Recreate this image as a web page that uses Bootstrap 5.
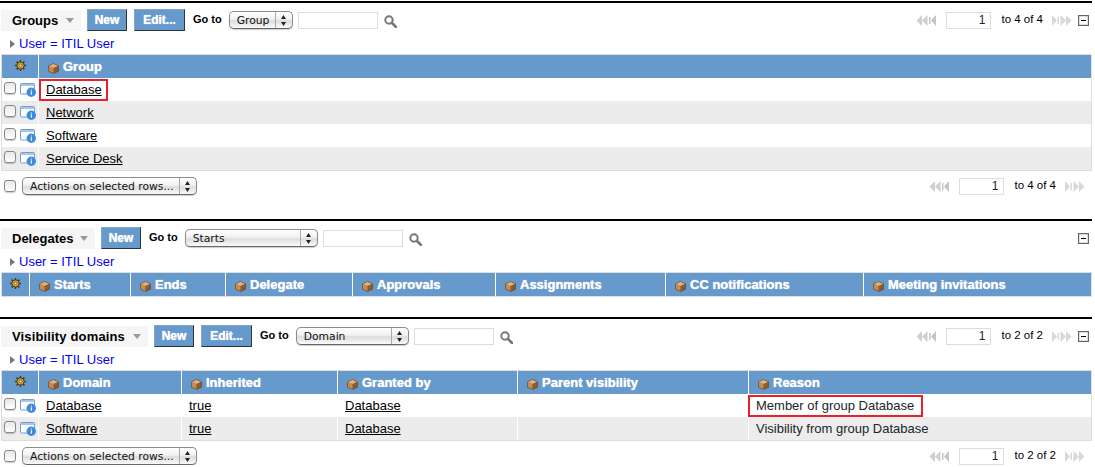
<!DOCTYPE html>
<html lang="en">
<head>
  <meta charset="UTF-8" />
  <meta name="viewport" content="width=device-width, initial-scale=1">
  <title>User details</title>
  <link href="https://cdn.jsdelivr.net/npm/bootstrap@5.3.0/dist/css/bootstrap.min.css" rel="stylesheet">
  <style>
    body {
      font-family: "Liberation Sans", Arial, sans-serif;
      font-size: 13px;
      color: #000;
      background: #fff;
    }

    .page-wrap { width: 1092px; padding-top: 1px; }

    .block { border-top: 2px solid #000; }
    .block-groups { margin-bottom: 24px; }
    .block-delegates { margin-bottom: 20px; }

    .tool-row { padding-top: 6px; box-sizing: content-box; height: 22px; }

    .block-title {
      margin-left: 1px;
      margin-top: 1px;
      height: 21px;
      padding: 0 7px 0 11px;
      background: #f5f5f5;
      font-weight: 700;
      line-height: 21px;
      white-space: nowrap;
    }
    .title-groups { width: 80px; }
    .title-delegates { width: 94px; }
    .title-domains { width: 147px; letter-spacing: .15px; }
    .block-title .caret {
      border-style: solid;
      border-width: 5px 4px 0;
      border-color: #999 transparent transparent;
    }

    .btn.btn-blue {
      height: 22px;
      padding: 0;
      background: #6699cc;
      color: #fff;
      font-size: 12px;
      font-weight: 700;
      line-height: 19px;
      border: 1px solid;
      border-color: #88a4c0 #2b3540 #2b3540 #88a4c0;
      border-radius: 0;
      text-shadow: 0 0 1px #fff;
    }
    .btn-new { width: 40px; margin-left: 6px; }
    .btn-edit { width: 51px; margin-left: 7px; }

    .goto-label { font-size: 11px; font-weight: 700; margin-top: -2px; }

    .form-select.mac-select {
      height: 18px;
      padding: 0 18px 0 7px;
      font-family: "DejaVu Sans", sans-serif;
      font-size: 10.75px;
      line-height: 15px;
      color: #111;
      border: 1px solid #8c8c8c;
      border-bottom-color: #666;
      border-radius: 5px;
      background-color: #eee;
      background-image:
        url("data:image/svg+xml,%3Csvg xmlns='http://www.w3.org/2000/svg' width='17' height='16'%3E%3Cpath d='M.5 0v16' stroke='%23aaa'/%3E%3Cpath d='M6 7l2.500-4L11 7zM6 10l2.500 4L11 10z' fill='%23222'/%3E%3C/svg%3E"),
        linear-gradient(#fff, #f1f1f1 45%, #dcdcdc 55%, #fafafa);
      background-repeat: no-repeat;
      background-position: right center, 0 0;
      background-size: 17px 16px, auto;
      box-shadow: 0 1px 1px rgba(0, 0, 0, .2);
    }
    .sel-group { width: 64px; margin-left: 7px; }
    .sel-starts { width: 133px; margin-left: 7px; }
    .sel-domain { width: 113px; margin-left: 7px; }
    .sel-actions { width: 175px; margin-left: 6px; }

    .form-control.search-box {
      width: 80px;
      height: 17px;
      margin-left: 5px;
      padding: 0;
      border: 1px solid #ddd;
      border-radius: 0;
    }
    .search-icon { width: 13px; height: 13px; margin-left: 6px; margin-top: 3px; }

    .pager { font-size: 11.5px; }
    .pager-arrows { width: 20px; height: 11px; }
    .form-control.pager-input {
      width: 45px;
      height: 17px;
      margin: 0 10px;
      padding: 0 5px;
      font-size: 12px;
      line-height: 15px;
      text-align: right;
      border: 1px solid #ddd;
      border-radius: 0;
    }
    .pager-text { margin-right: 9px; white-space: nowrap; }

    .collapse-box { width: 11px; height: 11px; margin: 1px 3px 0 6px; }

    .filter-row {
      margin-top: 5px;
      margin-bottom: 2px;
      padding-left: 10px;
      height: 16px;
      line-height: 16px;
      color: #0000ee;
    }
    .filter-row .tri {
      display: inline-block;
      margin-right: 4px;
      border-style: solid;
      border-width: 4px 0 4px 5px;
      border-color: transparent transparent transparent #777;
    }

    .grid-box { margin-left: 1px; border: 1px solid #ddd; }
    .grid-box .table { table-layout: fixed; width: 1089px; margin: 0; border-collapse: separate; border-spacing: 0; }
    .grid-box .table > * > * > * {
      height: 23px;
      padding: 0 7px;
      border: 0;
      border-left: 1px solid #fff;
      box-shadow: none;
      background: transparent;
      vertical-align: middle;
      white-space: nowrap;
      line-height: 18px;
    }
    .grid-box .table > * > * > *:first-child { border-left: 0; }
    .grid-box .table > thead > tr > th {
      padding-left: 9px;
      background: #6699cc;
      color: #fff;
      font-weight: 700;
      text-shadow: 0 0 1px #fff;
    }
    .grid-box .table > thead > tr > th.gear-cell { padding: 0; text-align: center; }
    .grid-box .table > tbody > tr:nth-child(even) > td { background: #ececec; }
    .grid-box .table > tbody > tr > td.sel-cell { padding: 0 0 0 2px; }

    .gear-icon { display: block; width: 11px; height: 11px; margin: -2px auto 0; }
    .cube-icon { width: 11px; height: 11px; margin-right: 4px; vertical-align: -3px; }
    .info-icon { width: 16px; height: 14px; margin-left: 4px; vertical-align: -3px; }

    .form-check-input.row-check {
      width: 12px;
      height: 12px;
      margin: 0;
      float: none;
      border: 1px solid #888;
      border-radius: 3px;
      background: linear-gradient(#e8e8e8, #fff);
      box-shadow: 0 1px 1px rgba(0, 0, 0, .2);
      vertical-align: 0;
    }

    .grid-box a { color: #000; text-decoration: underline; }

    .red-frame {
      display: inline-block;
      margin-left: -5px;
      padding: 0 4px 0 5px;
      box-shadow: 0 0 0 2px #e8222a;
    }
    .red-wide { margin-left: -6px; padding: 0 7px 0 6px; }

    .actions-row { margin-top: 6px; height: 18px; padding-left: 4px; }
    .pager-bottom { margin-right: 7px; }

    .c27 { width: 27px; }
    .c36 { width: 36px; }
    .c95 { width: 95px; }
    .c101 { width: 101px; }
    .c127 { width: 127px; }
    .c143 { width: 143px; }
    .c156 { width: 156px; }
    .c170 { width: 170px; }
    .c180 { width: 180px; }
    .c198 { width: 198px; }
    .c231 { width: 231px; }
  </style>
</head>
<body>

  <svg class="d-none" xmlns="http://www.w3.org/2000/svg">
    <symbol id="i-cube" viewBox="0 0 11 11">
      <path d="M5.500.5 10.500 2.800 5.500 5 .5 2.800z" fill="#e2b27c"/>
      <path d="M.5 2.800 5.500 5v5.500L.5 8.200z" fill="#c98a4a"/>
      <path d="M10.500 2.800 5.500 5v5.500l5-2.300z" fill="#8f5a2a"/>
      <path d="M5.500.5 10.500 2.800v5.400l-5 2.300-5-2.300V2.800z" fill="none" stroke="#5e3d1c" stroke-width=".6"/>
    </symbol>
    <symbol id="i-gear" viewBox="0 0 11 11">
      <path d="M5.500 0v11M0 5.500h11M1.600 1.600l7.800 7.800M9.400 1.600 1.600 9.400" stroke="#4a3a18" stroke-width="1.500"/>
      <circle cx="5.500" cy="5.500" r="3.600" fill="#d9a92e" stroke="#3a2c10" stroke-width=".8"/>
      <circle cx="5.500" cy="5.500" r="1.500" fill="#f7e9a0" stroke="#5a4614" stroke-width=".7"/>
    </symbol>
    <symbol id="i-info" viewBox="0 0 16 14">
      <rect x=".5" y=".5" width="14" height="10.500" rx="1" fill="#fff" stroke="#6d9dd3"/>
      <rect x="1" y="1" width="13" height="2" fill="#a9c6e8"/>
      <circle cx="11.300" cy="9.300" r="4.700" fill="#3d8bdc"/>
      <rect x="10.800" y="8.300" width="1.100" height="3.400" fill="#fff"/>
      <rect x="10.800" y="6.500" width="1.100" height="1.100" fill="#fff"/>
    </symbol>
    <symbol id="i-search" viewBox="0 0 13 13">
      <circle cx="5" cy="5" r="3.700" fill="none" stroke="#777" stroke-width="2"/>
      <path d="M8 8l4 4" stroke="#777" stroke-width="2.600" stroke-linecap="round"/>
    </symbol>
    <symbol id="i-prev" viewBox="0 0 20 11">
      <path d="M6 0v11L.5 5.500zM11.500 0v11L6 5.500z" fill="#cfcfcf"/>
      <path d="M20 0v11l-5-5.500zM13 2h1.500v7H13z" fill="#c4c4c4"/>
    </symbol>
    <symbol id="i-next" viewBox="0 0 20 11">
      <path d="M0 0v11l5-5.500zM7 2H5.500v7H7z" fill="#d8d8d8"/>
      <path d="M8.500 0v11L14 5.500zM14 0v11l5.500-5.500z" fill="#d8d8d8"/>
    </symbol>
    <symbol id="i-collapse" viewBox="0 0 11 11">
      <rect x=".6" y=".6" width="9.800" height="9.800" fill="#fff" stroke="#666" stroke-width="1.200"/>
      <path d="M3 5.500h5" stroke="#000"/>
    </symbol>
  </svg>

  <div class="page-wrap">

    <section class="block block-groups">
      <div class="tool-row d-flex align-items-center">
        <div class="block-title title-groups d-flex align-items-center justify-content-between">Groups<span class="caret"></span></div>
        <button type="button" class="btn btn-blue btn-new">New</button>
        <button type="button" class="btn btn-blue btn-edit">Edit...</button>
        <span class="goto-label ms-2">Go to</span>
        <select class="form-select mac-select sel-group"><option>Group</option></select>
        <input type="text" class="form-control search-box">
        <svg class="search-icon"><use href="#i-search"/></svg>
        <div class="pager d-flex align-items-center ms-auto">
          <svg class="pager-arrows"><use href="#i-prev"/></svg>
          <input type="text" class="form-control pager-input" value="1">
          <span class="pager-text">to 4 of 4</span>
          <svg class="pager-arrows"><use href="#i-next"/></svg>
          <svg class="collapse-box"><use href="#i-collapse"/></svg>
        </div>
      </div>
      <div class="filter-row"><span class="tri"></span>User = ITIL User</div>
      <div class="grid-box">
        <table class="table">
          <colgroup><col class="c36"><col></colgroup>
          <thead>
            <tr>
              <th class="gear-cell"><svg class="gear-icon"><use href="#i-gear"/></svg></th>
              <th><svg class="cube-icon"><use href="#i-cube"/></svg>Group</th>
            </tr>
          </thead>
          <tbody>
            <tr>
              <td class="sel-cell"><input class="form-check-input row-check" type="checkbox"><svg class="info-icon"><use href="#i-info"/></svg></td>
              <td><span class="red-frame"><a href="#">Database</a></span></td>
            </tr>
            <tr>
              <td class="sel-cell"><input class="form-check-input row-check" type="checkbox"><svg class="info-icon"><use href="#i-info"/></svg></td>
              <td><a href="#">Network</a></td>
            </tr>
            <tr>
              <td class="sel-cell"><input class="form-check-input row-check" type="checkbox"><svg class="info-icon"><use href="#i-info"/></svg></td>
              <td><a href="#">Software</a></td>
            </tr>
            <tr>
              <td class="sel-cell"><input class="form-check-input row-check" type="checkbox"><svg class="info-icon"><use href="#i-info"/></svg></td>
              <td><a href="#">Service Desk</a></td>
            </tr>
          </tbody>
        </table>
      </div>
      <div class="actions-row d-flex align-items-center">
        <input class="form-check-input row-check" type="checkbox">
        <select class="form-select mac-select sel-actions"><option>Actions on selected rows...</option></select>
        <div class="pager pager-bottom d-flex align-items-center ms-auto">
          <svg class="pager-arrows"><use href="#i-prev"/></svg>
          <input type="text" class="form-control pager-input" value="1">
          <span class="pager-text">to 4 of 4</span>
          <svg class="pager-arrows"><use href="#i-next"/></svg>
        </div>
      </div>
    </section>

    <section class="block block-delegates">
      <div class="tool-row d-flex align-items-center">
        <div class="block-title title-delegates d-flex align-items-center justify-content-between">Delegates<span class="caret"></span></div>
        <button type="button" class="btn btn-blue btn-new">New</button>
        <span class="goto-label ms-2">Go to</span>
        <select class="form-select mac-select sel-starts"><option>Starts</option></select>
        <input type="text" class="form-control search-box">
        <svg class="search-icon"><use href="#i-search"/></svg>
        <div class="pager d-flex align-items-center ms-auto">
          <svg class="collapse-box"><use href="#i-collapse"/></svg>
        </div>
      </div>
      <div class="filter-row"><span class="tri"></span>User = ITIL User</div>
      <div class="grid-box">
        <table class="table">
          <colgroup><col class="c27"><col class="c101"><col class="c95"><col class="c127"><col class="c143"><col class="c170"><col class="c198"><col></colgroup>
          <thead>
            <tr>
              <th class="gear-cell"><svg class="gear-icon"><use href="#i-gear"/></svg></th>
              <th><svg class="cube-icon"><use href="#i-cube"/></svg>Starts</th>
              <th><svg class="cube-icon"><use href="#i-cube"/></svg>Ends</th>
              <th><svg class="cube-icon"><use href="#i-cube"/></svg>Delegate</th>
              <th><svg class="cube-icon"><use href="#i-cube"/></svg>Approvals</th>
              <th><svg class="cube-icon"><use href="#i-cube"/></svg>Assignments</th>
              <th><svg class="cube-icon"><use href="#i-cube"/></svg>CC notifications</th>
              <th><svg class="cube-icon"><use href="#i-cube"/></svg>Meeting invitations</th>
            </tr>
          </thead>
        </table>
      </div>
    </section>

    <section class="block">
      <div class="tool-row d-flex align-items-center">
        <div class="block-title title-domains d-flex align-items-center justify-content-between">Visibility domains<span class="caret"></span></div>
        <button type="button" class="btn btn-blue btn-new">New</button>
        <button type="button" class="btn btn-blue btn-edit">Edit...</button>
        <span class="goto-label ms-2">Go to</span>
        <select class="form-select mac-select sel-domain"><option>Domain</option></select>
        <input type="text" class="form-control search-box">
        <svg class="search-icon"><use href="#i-search"/></svg>
        <div class="pager d-flex align-items-center ms-auto">
          <svg class="pager-arrows"><use href="#i-prev"/></svg>
          <input type="text" class="form-control pager-input" value="1">
          <span class="pager-text">to 2 of 2</span>
          <svg class="pager-arrows"><use href="#i-next"/></svg>
          <svg class="collapse-box"><use href="#i-collapse"/></svg>
        </div>
      </div>
      <div class="filter-row"><span class="tri"></span>User = ITIL User</div>
      <div class="grid-box">
        <table class="table">
          <colgroup><col class="c36"><col class="c143"><col class="c156"><col class="c180"><col class="c231"><col></colgroup>
          <thead>
            <tr>
              <th class="gear-cell"><svg class="gear-icon"><use href="#i-gear"/></svg></th>
              <th><svg class="cube-icon"><use href="#i-cube"/></svg>Domain</th>
              <th><svg class="cube-icon"><use href="#i-cube"/></svg>Inherited</th>
              <th><svg class="cube-icon"><use href="#i-cube"/></svg>Granted by</th>
              <th><svg class="cube-icon"><use href="#i-cube"/></svg>Parent visibility</th>
              <th><svg class="cube-icon"><use href="#i-cube"/></svg>Reason</th>
            </tr>
          </thead>
          <tbody>
            <tr>
              <td class="sel-cell"><input class="form-check-input row-check" type="checkbox"><svg class="info-icon"><use href="#i-info"/></svg></td>
              <td><a href="#">Database</a></td>
              <td><a href="#">true</a></td>
              <td><a href="#">Database</a></td>
              <td></td>
              <td><span class="red-frame red-wide">Member of group Database</span></td>
            </tr>
            <tr>
              <td class="sel-cell"><input class="form-check-input row-check" type="checkbox"><svg class="info-icon"><use href="#i-info"/></svg></td>
              <td><a href="#">Software</a></td>
              <td><a href="#">true</a></td>
              <td><a href="#">Database</a></td>
              <td></td>
              <td>Visibility from group Database</td>
            </tr>
          </tbody>
        </table>
      </div>
      <div class="actions-row d-flex align-items-center">
        <input class="form-check-input row-check" type="checkbox">
        <select class="form-select mac-select sel-actions"><option>Actions on selected rows...</option></select>
        <div class="pager pager-bottom d-flex align-items-center ms-auto">
          <svg class="pager-arrows"><use href="#i-prev"/></svg>
          <input type="text" class="form-control pager-input" value="1">
          <span class="pager-text">to 2 of 2</span>
          <svg class="pager-arrows"><use href="#i-next"/></svg>
        </div>
      </div>
    </section>

  </div>

  <script src="https://cdn.jsdelivr.net/npm/bootstrap@5.3.0/dist/js/bootstrap.bundle.min.js"></script>
</body>
</html>
